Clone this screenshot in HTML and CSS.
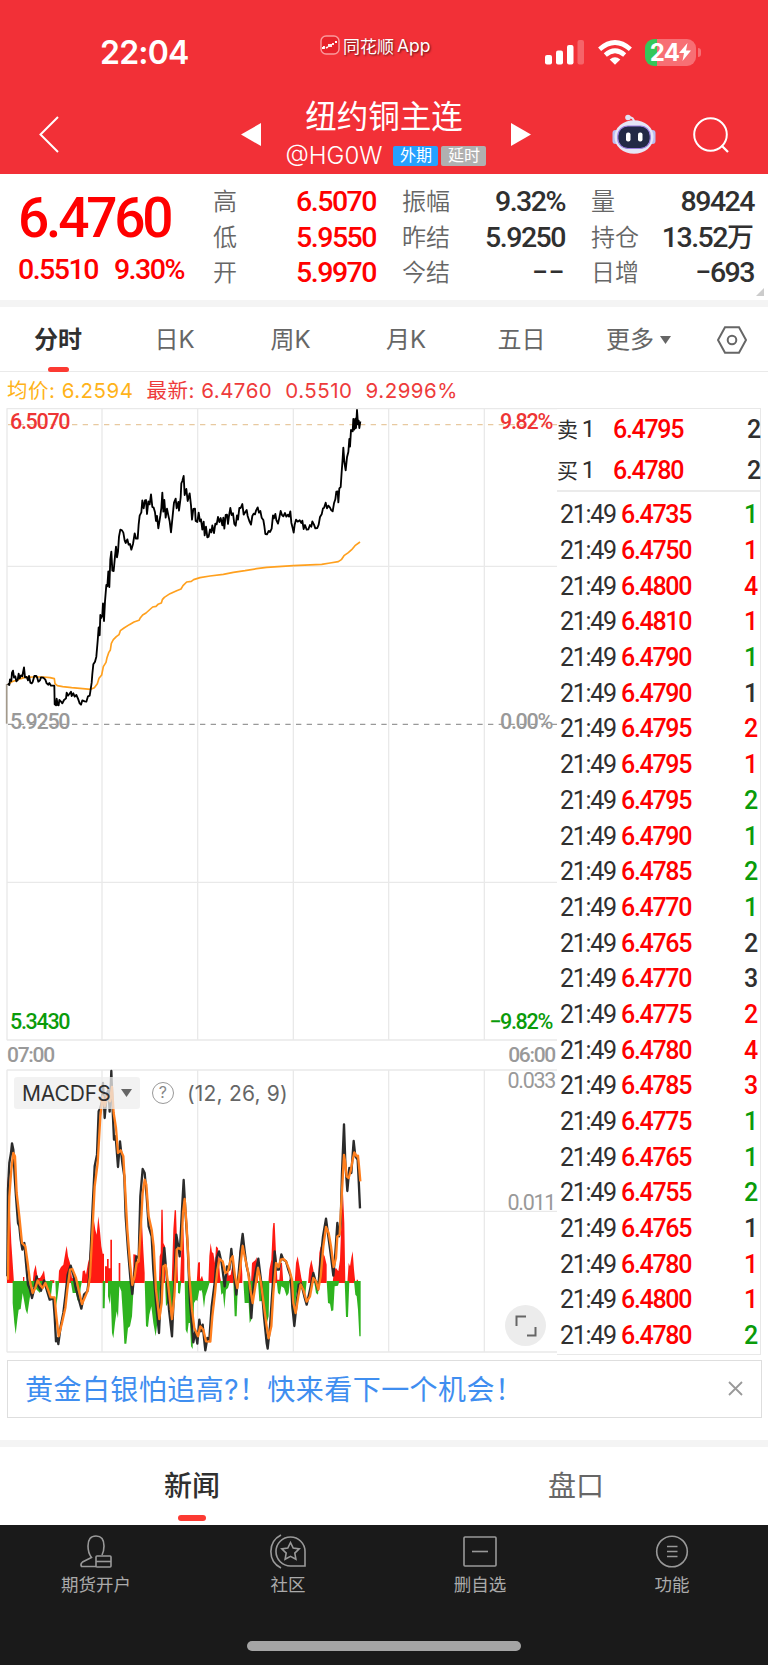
FILE: index.html
```html
<!DOCTYPE html>
<html lang="zh-CN">

	<head>
		<meta charset="UTF-8" />
		<meta name="viewport" content="width=device-width, initial-scale=1.0" />
		<title>纽约铜主连</title>
		<link rel="stylesheet" href="styles.css">
	</head>

	<body>
		<header class="header">
			<div class="status">
				<span class="clock">22:04</span>
				<span class="brand">
					<svg width="20" height="20" viewBox="0 0 20 20">
						<rect x="1" y="1" width="18" height="18" rx="5" fill="#e8222b" stroke="#fa9a9d" stroke-width="1.4" />
						<path d="M2 13h2v-2M6 13l2-1M9 9v3M11 12V9M13 8v2M15 7h2" stroke="#fff" stroke-width="1.8" fill="none" />
					</svg>
					同花顺<span class="app">App</span>
				</span>
				<span class="signals">
					<svg width="40" height="26" viewBox="0 0 40 26" fill="#fff">
						<rect x="0" y="16" width="7" height="9.500" rx="2" />
						<rect x="11" y="11.500" width="7" height="14" rx="2" />
						<rect x="22" y="6" width="6.500" height="19.500" rx="2" />
						<rect x="32.500" y="1" width="6.500" height="24.500" rx="2" opacity=".25" />
					</svg>
					<svg width="34" height="25" viewBox="0 0 34 25" fill="none" stroke="#fff" stroke-width="4.600">
						<path d="M1.600 9.200Q17-4.200 32.400 9.200" />
						<path d="M7.300 15Q17 6.500 26.700 15" />
						<path d="M17 24.800l-5.300-5.400q5.300-4.300 10.600 0z" fill="#fff" stroke="none" />
					</svg>
					<span class="battery">
						<b>24</b>
						<svg width="12" height="18" viewBox="0 0 12 18"><path d="M8.500 0L0 10h5L3.500 18L12 7.500H7z" fill="#fff" /></svg>
					</span>
				</span>
			</div>
			<div class="nav">
				<svg class="back" width="20" height="37" viewBox="0 0 20 37" fill="none" stroke="#fff" stroke-width="2"><path d="M19 1L1.500 18.500L19 36" /></svg>
				<svg class="prev" width="20" height="23" viewBox="0 0 20 23" fill="#fff"><path d="M20 0v23L0 11.500z" /></svg>
				<div class="name">
					<h1>纽约铜主连</h1>
					<p><span class="code">@HG0W</span><i class="tag blue">外期</i><i class="tag">延时</i></p>
				</div>
				<svg class="next" width="20" height="23" viewBox="0 0 20 23" fill="#fff"><path d="M0 0l20 11.500L0 23z" /></svg>
				<svg class="robot" width="44" height="41" viewBox="0 0 44 41">
					<path d="M22 8Q22 3 16 3" fill="none" stroke="#e4e6f5" stroke-width="2" />
					<circle cx="16" cy="3.500" r="2.800" fill="#dfe3f5" />
					<rect x="0.500" y="16" width="6" height="14" rx="3" fill="#b9bdf0" />
					<rect x="37.500" y="16" width="6" height="14" rx="3" fill="#b9bdf0" />
					<ellipse cx="22" cy="23" rx="19.500" ry="16.800" fill="#e6e6f6" />
					<rect x="5.800" y="12" width="32.500" height="22.500" rx="10" fill="#232946" stroke="#9b7fe0" stroke-width="1.200" />
					<rect x="14" y="18.500" width="4.500" height="9" rx="2" fill="#fff" />
					<rect x="26" y="18.500" width="4.500" height="9" rx="2" fill="#fff" />
				</svg>
				<svg class="search" width="36" height="36" viewBox="0 0 36 36" fill="none" stroke="#fff" stroke-width="2"><circle cx="17.500" cy="17.500" r="16.300" /><path d="M28.500 28.500l6.500 6.500" stroke-width="2.300" /></svg>
			</div>
		</header>

		<section class="quote">
			<div class="last">
				<div class="price">6.4760</div>
				<div class="change"><span>0.5510</span><span>9.30%</span></div>
			</div>
			<dl class="stats">
				<dt>高</dt><dd class="red">6.5070</dd>
				<dt>振幅</dt><dd>9.32%</dd>
				<dt>量</dt><dd>89424</dd>
				<dt>低</dt><dd class="red">5.9550</dd>
				<dt>昨结</dt><dd>5.9250</dd>
				<dt>持仓</dt><dd>13.52<span class="wan">万</span></dd>
				<dt>开</dt><dd class="red">5.9970</dd>
				<dt>今结</dt><dd class="dash">−−</dd>
				<dt>日增</dt><dd>−693</dd>
			</dl>
		</section>

		<nav class="periods">
			<span class="on">分时</span>
			<span>日K</span>
			<span>周K</span>
			<span>月K</span>
			<span>五日</span>
			<span class="more">更多<svg width="11" height="8" viewBox="0 0 11 8" fill="#666"><path d="M0 0h11L5.500 8z" /></svg></span>
			<svg width="30" height="28" viewBox="0 0 30 28" fill="none" stroke="#666" stroke-width="2"><path d="M8 1.200h14L29 14l-7 12.800H8L1 14z" /><circle cx="15" cy="14" r="4.300" /></svg>
		</nav>

		<p class="legend"><span class="avg">均价: 6.2594</span><span>最新: 6.4760</span><span>0.5510</span><span>9.2996%</span></p>

		<main class="board">
			<div class="charts">
				<!-- three svg units to one css pixel -->
				<div class="chart">
					<svg width="557" height="633" viewBox="0 24 1671 1899" fill="none">
						<path d="M21 26H1671M21 499H1671M21 1447H1671M21 1920H1671M21 25V1921M306 25V1921M593 25V1921M880 25V1921M1166 25V1921M1453 25V1921" stroke="#e9e9e9" stroke-width="4" />
						<path d="M24 74H1671" stroke="#e8c9a0" stroke-width="3.500" stroke-dasharray="16 16" />
						<path d="M24 973H1671" stroke="#999" stroke-width="3.500" stroke-dasharray="16 16" />
						<path d="M20 971V852" stroke="#a39a8c" stroke-width="5" />
						<path d="M24 854L36 845L50 840L62 836L75 832L100 831L130 831L150 833L163 836L165 851L172 857L188 860L215 863L240 865L272 868L283 863L292 851L297 835L305 825L310 800L318 787L321 773L326 758L331 750L334 730L340 719L349 710L357 704L361 692L372 684L388 674L402 666L417 661L420 655L428 645L438 639L448 630L458 621L468 619L474 613L484 609L487 599L493 592L510 581L530 572L543 567L549 557L560 546L574 544L581 539L600 533L630 528L670 523L700 517L735 512L770 506L800 502L880 497L965 493L990 489L1015 485L1024 479L1032 467L1045 458L1055 449L1065 437L1080 426" stroke="#ffa01e" stroke-width="5" stroke-linejoin="round" />
						<path d="M23 851L28 855L30 838L34 843L36 818L39 812L42 833L46 829L49 844L53 840L56 821L59 835L63 826L67 829L69 817L72 802L75 832L80 831L84 841L87 828L91 848L95 850L98 846L103 828L109 828L112 834L115 845L120 841L123 832L130 833L136 839L140 850L145 854L148 849L153 857L163 857L164 913L168 916L170 896L173 915L176 916L178 900L183 905L187 910L192 900L198 895L200 878L204 887L208 882L213 875L215 888L220 880L224 890L229 885L234 896L239 910L243 914L247 901L254 904L259 905L264 889L269 887L271 875L275 848L277 822L280 793L285 785L289 770L293 723L296 682L299 706L301 645L304 654L307 645L309 610L312 663L315 604L319 555L322 559L325 514L328 561L331 478L334 455L337 512L341 513L345 469L348 440L351 472L354 455L357 410L361 389L366 391L370 398L374 421L377 429L382 418L386 434L390 432L394 449L399 432L404 400L408 416L413 416L416 373L419 347L424 337L427 301L431 325L435 301L438 300L441 342L445 304L449 313L453 283L457 321L461 323L465 337L468 363L471 348L475 385L481 347L484 324L487 278L490 335L493 300L497 353L501 326L505 346L509 364L513 397L519 337L522 308L527 296L530 325L535 306L537 332L542 292L544 250L547 243L551 228L554 285L559 267L563 303L569 280L573 316L576 359L580 327L585 326L587 363L592 366L596 338L600 364L603 358L607 389L611 365L614 406L618 380L622 412L626 410L630 388L634 397L637 376L642 399L646 371L650 373L654 351L658 366L662 354L667 376L670 353L673 386L677 345L681 344L684 372L687 348L691 324L695 345L699 340L703 372L707 377L711 346L714 359L718 324L722 324L727 312L731 344L736 336L740 330L743 348L748 363L753 374L757 348L761 341L765 343L768 332L773 322L777 338L781 333L785 353L790 360L793 378L796 402L801 403L806 393L810 396L815 386L819 346L822 355L826 342L829 360L834 371L838 353L842 333L846 345L850 349L855 339L859 350L864 344L867 350L871 334L874 368L878 384L881 398L884 374L888 359L893 365L899 361L904 369L907 362L911 387L915 375L920 389L925 388L930 375L934 380L937 364L942 374L946 385L952 384L956 374L960 351L965 343L969 325L972 324L977 308L981 325L985 317L990 323L994 331L998 334L1002 310L1006 298L1009 275L1013 274L1015 307L1018 265L1022 261L1025 216L1028 175L1030 143L1033 186L1037 211L1041 172L1045 156L1048 117L1050 140L1053 90L1058 94L1060 57L1063 89L1066 56L1068 84L1071 30L1074 73L1076 62L1078 84L1081 64" stroke="#000" stroke-width="5.500" stroke-linejoin="round" />
					</svg>
					<span class="mark high red">6.5070</span>
					<span class="mark high right red">9.82%</span>
					<span class="mark mid">5.9250</span>
					<span class="mark mid right">0.00%</span>
					<span class="mark low green">5.3430</span>
					<span class="mark low right green">−9.82%</span>
				</div>
				<div class="times"><span>07:00</span><span>06:00</span></div>
				<div class="macd">
					<svg width="557" height="284" viewBox="0 118 1671 852" fill="none">
						<path d="M21 121H1671M21 545H1671M21 967H1671M21 120V968M306 120V968M593 120V968M880 120V968M1166 120V968M1453 120V968" stroke="#e9e9e9" stroke-width="4" />
						<path d="M21 760V440L30 545L34 640L38 700L42 760H69V742H73V760H98L101 728L107 705L113 745L120 745L126 735L132 722L137 760H150V752H163V760H175L177 723L183 712L190 705L196 670L200 648L204 680L210 700L216 745L228 748L232 760H245L248 725L254 722L258 735L264 700L268 685L274 610L280 560L286 600L290 615L295 560L300 605L304 650L308 672L312 672V760H315V710H321V688H326V716H331V630H336V760H356V700H361V760H400V674L408 675L415 700L421 620L426 576L430 660L434 730V760H477L479 680L482 670L484 540H488L490 640L495 650V760H515L520 600L524 542H528L531 640L534 760H540L544 660L550 590L553 690V760H590L594 700L598 698V760H625V760L628 760V758L593 760L595 698H600V750L606 738L612 760H625L628 680L632 640L636 668L640 670L645 700L648 650L654 655L660 740L664 760H678L682 705L686 738L692 735L698 700L702 760H714L718 670L722 650L727 735V760H753L756 700L762 695L766 692L770 682L774 760H805L808 720L814 690L818 600L820 580H824L828 670L832 750H838L842 700L846 700L850 760H867V750H873V760H884L888 700L893 680L898 708L904 745L908 760H924L928 718L934 690L940 720L944 760H954L958 670L962 650L968 670L974 680L980 705V760H998L1002 720L1008 715L1015 725L1020 690L1024 580L1029 490L1033 580L1036 760H1042L1046 700L1050 710L1054 684L1058 665L1062 720L1066 760H1070V750H1074V760Z" fill="#ff1a12" />
						<path d="M38 754V820L43 880L47 914L52 870L56 840L62 838L68 790L72 812L77 840L82 854L87 820L94 776L104 770L110 780L120 790L127 765L140 770L152 806L158 754H166L169 830L174 790L178 754H212L218 790L228 790L232 812L238 815L242 775L246 754H308V836H314L316 754H324V800L330 824L332 790L336 910L340 926L345 880L350 845L354 866L358 770L364 785L370 880L373 942H379L384 895L390 890L396 860L402 754H434L438 890L444 892L448 855L454 830L460 880L467 920L472 880L478 800L482 754H495L498 830L504 820L510 840L515 872L520 830L524 754H534V790L540 792L544 754H554L557 900L562 912L566 880L570 880L573 950L578 958L582 820L588 810L592 815L598 780L600 785L604 780L607 790L612 835L616 800L624 775L630 754H660L664 795L669 790L673 838L678 780L684 775L690 754H700L704 860H710L714 754H730L734 820H746L749 880L754 870L758 790L764 780L768 754H774L778 815L790 814L794 850L798 890L806 860L808 754H830L834 790L840 795L844 770L852 775L860 800L866 790L870 754H872L876 850L884 860L888 800L893 775L900 754H906L910 790L916 795L920 754H942L948 790L954 795L958 754H980L984 820L990 822L994 845L1000 842L1004 770L1014 768L1018 754H1034L1038 862H1044L1048 754H1062L1066 795L1070 800L1074 840L1078 920H1082V754Z" fill="#2eb31f" />
						<path d="M22 740L24 480L28 400L33 370L36 341L40 360L44 440L48 500L54 580L58 590L62 630L67 660L73 640L78 700L84 765L90 780L96 805L102 780L110 740L116 770L123 783L132 752L140 780L149 810L160 806L164 860L168 935L172 926L175 943L182 890L190 850L196 800L203 735L212 708L220 735L226 770L238 815L244 837L252 795L262 785L268 740L273 640L278 530L284 410L291 375L296 245L301 235L306 215L309 160L314 265L320 195L325 180L329 246L334 124L338 240L342 330L347 320L354 412L360 335L367 400L373 440L377 560L384 660L391 745L397 793L402 740L409 680L416 685L421 500L428 418L434 430L440 500L446 590L455 620L460 720L468 820L477 910L484 760L493 655L500 740L507 840L516 920L523 760L529 615L535 650L539 680L546 540L551 451L556 540L563 650L570 820L580 938L586 905L592 942L598 870L603 905L608 885L612 925L616 962L622 925L628 930L635 830L644 760L650 685L657 665L665 700L674 770L681 710L688 720L694 658L700 720L709 795L716 730L722 660L728 613L734 665L740 710L747 740L754 865L761 760L768 720L775 687L784 760L792 860L800 940L803 957L810 890L818 770L824 665L830 720L837 720L844 674L850 690L858 695L865 720L872 740L877 830L883 889L891 810L896 765L904 762L913 800L920 825L930 780L940 730L948 760L954 780L961 700L969 620L978 567L985 620L993 680L1000 738L1006 670L1012 580L1017 620L1022 580L1026 430L1032 284L1036 400L1042 484L1048 415L1054 430L1061 334L1066 380L1073 390L1076 450L1080 536" stroke="#2b2b2b" stroke-width="7" stroke-linejoin="round" />
						<path d="M24 750L25 650L28 500L34 420L40 370L45 380L50 490L58 560L66 640L76 650L83 700L90 755L98 790L106 775L113 752L120 765L128 775L136 760L144 780L152 803L164 803L168 850L176 920L186 880L196 835L202 780L210 720L217 718L228 745L236 780L246 823L256 800L264 780L270 740L277 610L284 470L293 400L301 260L308 200L314 230L322 200L330 215L336 172L341 250L348 295L354 370L362 362L370 380L374 450L382 600L390 700L397 766L404 740L410 700L416 695L422 600L428 490L434 450L439 465L446 560L455 600L461 650L468 780L478 868L485 820L490 710L497 706L504 760L516 868L523 800L530 660L536 655L544 660L549 550L554 508L560 590L568 740L576 840L583 895L594 920L601 890L610 900L618 935L631 936L637 860L645 790L652 720L659 688L668 695L676 730L684 725L692 690L698 680L705 740L712 775L720 720L728 649L734 680L744 725L751 780L758 820L766 770L774 715L783 760L792 830L800 890L806 926L814 890L820 790L828 700L836 712L842 690L850 688L858 695L868 720L876 750L880 820L887 850L895 800L902 764L910 780L920 816L930 800L940 745L948 755L955 780L962 740L970 650L978 592L986 610L993 650L1001 712L1008 685L1012 620L1019 615L1024 520L1032 376L1036 400L1040 440L1046 445L1053 420L1058 390L1063 368L1070 380L1074 378L1078 420L1081 455" stroke="#ff7f1e" stroke-width="7" stroke-linejoin="round" />
					</svg>
					<div class="indicator">
						<span class="chip">MACDFS<svg width="11" height="8" viewBox="0 0 11 8" fill="#666"><path d="M0 0h11L5.500 8z" /></svg></span>
						<span class="help">?</span>
						<span class="args">(12, 26, 9)</span>
					</div>
					<span class="mark top right">0.033</span>
					<span class="mark half right">0.011</span>
					<span class="expand">
						<svg width="22" height="22" viewBox="0 0 22 22" fill="none" stroke="#666" stroke-width="2"><path d="M1.500 11V1.500H11M12 20.500h8.500V12" /></svg>
					</span>
				</div>
			</div>

			<div class="trades">
				<ul class="book">
					<li><span>卖<em>1</em></span><b>6.4795</b><i>2</i></li>
					<li><span>买<em>1</em></span><b>6.4780</b><i>2</i></li>
				</ul>
				<ul class="ticks">
					<li><span>21:49</span><b>6.4735</b><i class="green">1</i></li>
					<li><span>21:49</span><b>6.4750</b><i class="red">1</i></li>
					<li><span>21:49</span><b>6.4800</b><i class="red">4</i></li>
					<li><span>21:49</span><b>6.4810</b><i class="red">1</i></li>
					<li><span>21:49</span><b>6.4790</b><i class="green">1</i></li>
					<li><span>21:49</span><b>6.4790</b><i>1</i></li>
					<li><span>21:49</span><b>6.4795</b><i class="red">2</i></li>
					<li><span>21:49</span><b>6.4795</b><i class="red">1</i></li>
					<li><span>21:49</span><b>6.4795</b><i class="green">2</i></li>
					<li><span>21:49</span><b>6.4790</b><i class="green">1</i></li>
					<li><span>21:49</span><b>6.4785</b><i class="green">2</i></li>
					<li><span>21:49</span><b>6.4770</b><i class="green">1</i></li>
					<li><span>21:49</span><b>6.4765</b><i>2</i></li>
					<li><span>21:49</span><b>6.4770</b><i>3</i></li>
					<li><span>21:49</span><b>6.4775</b><i class="red">2</i></li>
					<li><span>21:49</span><b>6.4780</b><i class="red">4</i></li>
					<li><span>21:49</span><b>6.4785</b><i class="red">3</i></li>
					<li><span>21:49</span><b>6.4775</b><i class="green">1</i></li>
					<li><span>21:49</span><b>6.4765</b><i class="green">1</i></li>
					<li><span>21:49</span><b>6.4755</b><i class="green">2</i></li>
					<li><span>21:49</span><b>6.4765</b><i>1</i></li>
					<li><span>21:49</span><b>6.4780</b><i class="red">1</i></li>
					<li><span>21:49</span><b>6.4800</b><i class="red">1</i></li>
					<li><span>21:49</span><b>6.4780</b><i class="green">2</i></li>
				</ul>
			</div>
		</main>

		<div class="notice">
			<span>黄金白银怕追高?！快来看下一个机会！</span>
			<svg width="15" height="15" viewBox="0 0 15 15" stroke="#999" stroke-width="1.800"><path d="M1 1l13 13M14 1L1 14" /></svg>
		</div>

		<nav class="panels">
			<span class="on">新闻</span>
			<span>盘口</span>
		</nav>

		<footer class="bar">
			<div class="items">
				<a>
					<svg width="36" height="36" viewBox="0 0 36 36"><path d="M18 32.500H3.500Q2 30 4.500 28L13.500 23.500Q10 19 10 12Q10 2 18 2Q26 2 26 12Q26 17 24 21" /><rect x="18" y="22" width="15" height="11" rx="1" /><path d="M18 27.500H33" /></svg>
					期货开户
				</a>
				<a>
					<svg width="36" height="36" viewBox="0 0 36 36"><path d="M35 32H20.500A14.500 14.500 0 1 1 35 17.500ZM11 1A18.500 18.500 0 0 0 11 34" /><path d="M20.500 8.500l2.700 5.600 6 .8-4.400 4.200 1.100 6.100-5.400-2.900-5.400 2.900 1.100-6.100-4.400-4.200 6-.8z" /></svg>
					社区
				</a>
				<a>
					<svg width="36" height="36" viewBox="0 0 36 36"><rect x="2" y="3" width="32" height="29" rx="1" /><path d="M10 17.500H26" /></svg>
					删自选
				</a>
				<a>
					<svg width="36" height="36" viewBox="0 0 36 36"><circle cx="18" cy="17.500" r="15.300" /><path d="M13 12.500H23.500M13 17.500H23.500M13 22.500H23.500" /></svg>
					功能
				</a>
			</div>
			<div class="home"></div>
		</footer>
	</body>

</html>
```
FILE: styles.css
```css
* {
	box-sizing: border-box;
	margin: 0;
	padding: 0;
}

body {
	width: 768px;
	height: 1665px;
	overflow: hidden;
	background: #fff;
	color: #303030;
	font-family: Inter, "Noto Sans CJK SC", sans-serif;
}

svg {
	display: block;
	flex: none;
}

i, em {
	font-style: normal;
}

ul {
	list-style: none;
}

.red {
	color: #f00;
}

.green {
	color: #0a9b0a;
}

/* header */
.header {
	height: 174px;
	background: #f23037;
	color: #fff;
}

.status {
	display: grid;
	grid-template-columns: 320px 225px 1fr;
	height: 90px;
	padding-top: 32px;
}

.clock {
	padding-left: 100px;
	font-size: 32px;
	font-weight: 600;
	line-height: 42px;
	letter-spacing: -0.8px;
}

.brand {
	display: flex;
	align-items: center;
	height: 26px;
	font-size: 17px;
	text-shadow: 1px 1px 2px rgba(0, 0, 0, 0.6);
}

.brand svg {
	margin-right: 3px;
}

.app {
	margin-left: 3px;
	font-size: 17.5px;
}

.signals {
	display: flex;
	align-items: center;
	gap: 13px;
	height: 40px;
}

.battery {
	position: relative;
	display: flex;
	align-items: center;
	justify-content: center;
	width: 51px;
	height: 27px;
	border-radius: 9px;
	background: linear-gradient(90deg, #34c759 12px, #f76f74 12px);
}

.battery::after {
	content: "";
	position: absolute;
	right: -5px;
	top: 9px;
	width: 3px;
	height: 9px;
	border-radius: 0 4px 4px 0;
	background: #f76f74;
}

.battery b {
	font-size: 24px;
	letter-spacing: -0.8px;
}

.nav {
	display: grid;
	grid-template-columns: 39px 202px 20px 250px 101px 81px 1fr;
	align-items: center;
	height: 84px;
}

.back {
	grid-column: 2;
	margin-top: 5px;
}

.prev,
.next {
	margin-top: 4px;
}

.search {
	margin-top: 5px;
}

.robot {
	margin-top: 4px;
}

.name {
	align-self: start;
	text-align: center;
}

.name h1 {
	height: 50px;
	padding-right: 4px;
	font-size: 31.5px;
	font-weight: 400;
	line-height: 53px;
}

.name p {
	display: flex;
	align-items: center;
	justify-content: center;
	height: 31px;
}

.code {
	margin-right: 11px;
	font-size: 24px;
	font-weight: 350;
}

.tag {
	width: 45px;
	height: 20px;
	border-radius: 2px;
	background: #b0b0b0;
	font-size: 16px;
	line-height: 19px;
}

.tag.blue {
	margin-right: 3px;
	background: #26a1ff;
}

/* quote summary */
.quote {
	display: grid;
	grid-template-columns: 213px 541px;
	height: 133px;
	border-bottom: 7px solid #f4f4f4;
	font-family: Roboto, "Noto Sans CJK SC", sans-serif;
	font-stretch: 88%;
	position: relative;
}

.quote::after {
	content: "";
	position: absolute;
	right: 4px;
	bottom: 4px;
	border: 4px solid #ccc;
	border-top-color: transparent;
	border-left-color: transparent;
}

.last {
	padding-left: 18px;
	color: #f00;
	font-weight: 500;
}

.price {
	height: 78px;
	font-size: 55px;
	line-height: 89px;
	letter-spacing: -3.2px;
}

.change {
	display: flex;
	gap: 16px;
	font-size: 28.5px;
	line-height: 35px;
	letter-spacing: -1.5px;
}

.stats {
	display: grid;
	grid-template-columns: 74px 89px 26px 74px 89px 26px 64px 99px;
	grid-auto-rows: 35.5px;
	padding-top: 10px;
	font-size: 28.5px;
	line-height: 35px;
}

.stats dt {
	color: #666;
	font-size: 24px;
	font-weight: 350;
	line-height: 36px;
}

.stats dt:nth-of-type(3n+2) {
	grid-column: 4;
}

.stats dt:nth-of-type(3n) {
	grid-column: 7;
}

.stats dd {
	justify-self: end;
	white-space: nowrap;
	font-weight: 500;
	letter-spacing: -1.5px;
}

.stats .dash {
	letter-spacing: 0.5px;
}

.wan {
	font-size: 27px;
	letter-spacing: 0;
}

/* period tabs */
.periods {
	display: grid;
	grid-template-columns: 116px 117px 115px 116px 115px 138px 1fr;
	align-items: center;
	height: 65px;
	border-bottom: 1px solid #eaeaea;
	color: #666;
	font-size: 24px;
	font-weight: 400;
	line-height: 65px;
	text-align: center;
}

.on {
	position: relative;
	color: #303030;
	font-weight: 600;
}

.on::after {
	content: "";
	position: absolute;
	left: 50%;
	bottom: 0;
	width: 21px;
	height: 5px;
	margin-left: -10px;
	border-radius: 3px;
	background: #fc3a32;
}

.more {
	display: flex;
	align-items: center;
	gap: 6px;
	padding-left: 27px;
}

.legend {
	display: flex;
	gap: 13px;
	height: 36px;
	padding-left: 7px;
	color: #ee3b3b;
	font-size: 20.5px;
	line-height: 38px;
	letter-spacing: 0.5px;
}

.avg {
	color: #ffb31a;
}

/* chart and trades */
.board {
	display: grid;
	grid-template-columns: 557px 204px;
	height: 945px;
	font-family: Roboto, "Noto Sans CJK SC", sans-serif;
	font-stretch: 88%;
}

.chart,
.macd {
	position: relative;
}

.mark {
	position: absolute;
	left: 10px;
	color: #999;
	font-size: 21.5px;
	font-weight: 500;
	line-height: 24px;
	letter-spacing: -1.3px;
}

.mark.right {
	left: auto;
	right: 5px;
}

.mark.red {
	color: #ee3535;
}

.mark.green {
	color: #0a9b0a;
}

.mark.high {
	top: 2px;
}

.mark.mid {
	top: 302px;
}

.mark.low {
	top: 602px;
}

.mark.top {
	top: 0;
	right: 2px;
	font-weight: 400;
}

.mark.half {
	top: 122px;
	right: 2px;
	font-weight: 400;
}

.times {
	display: flex;
	justify-content: space-between;
	height: 28px;
	padding: 0 2px 0 7px;
	color: #999;
	font-size: 21px;
	font-weight: 500;
	line-height: 28px;
	letter-spacing: -1.3px;
}

.indicator {
	position: absolute;
	left: 14px;
	top: 8px;
	display: flex;
	align-items: center;
	height: 32px;
	color: #666;
	font-family: Inter, sans-serif;
	font-size: 21px;
	font-stretch: normal;
	letter-spacing: 0.2px;
}

.chip {
	display: flex;
	align-items: center;
	justify-content: space-between;
	width: 126px;
	height: 32px;
	padding: 0 8px 0 8px;
	border-radius: 3px;
	background: rgba(238, 238, 238, 0.75);
	color: #303030;
	letter-spacing: -0.1px;
}

.help {
	width: 22px;
	height: 22px;
	margin: 0 13px 0 12px;
	border: 1.5px solid #999;
	border-radius: 50%;
	color: #888;
	font-size: 16px;
	line-height: 19px;
	text-align: center;
}

.expand {
	position: absolute;
	right: 11px;
	bottom: 7px;
	display: flex;
	align-items: center;
	justify-content: center;
	width: 41px;
	height: 41px;
	border-radius: 50%;
	background: #ececec;
}

.trades {
	border: 1px solid #e8e8e8;
	border-left: 0;
	font-size: 25px;
}

.trades li {
	display: grid;
	grid-template-columns: 61px 1fr 20px;
	align-items: center;
	height: 35.7px;
	padding: 0 3px 0 3px;
	letter-spacing: -1.3px;
	white-space: nowrap;
}

.trades b {
	color: #f00;
	font-weight: 500;
}

.trades i {
	font-weight: 500;
	text-align: right;
}

.book {
	height: 83px;
	border-bottom: 2px solid #ebebeb;
	margin-bottom: 5px;
}

.trades .book li {
	grid-template-columns: 56px 1fr 20px;
	height: 41px;
	padding: 0;
}

.book span {
	font-size: 21px;
	font-weight: 400;
	line-height: 30px;
}

.book em {
	margin-left: 5px;
	font-size: 24px;
}

/* notice */
.notice {
	display: flex;
	align-items: center;
	justify-content: space-between;
	height: 58px;
	margin: 7px 6px 22px 7px;
	padding: 0 18px 2px 17px;
	border: 1px solid #dedede;
	color: #3f8ef0;
	font-size: 28px;
	font-weight: 400;
	letter-spacing: 0.45px;
}

.panels {
	display: grid;
	grid-template-columns: 1fr 1fr;
	height: 85px;
	border-top: 7px solid #f4f4f4;
	color: #666;
	font-size: 28px;
	font-weight: 400;
	line-height: 79px;
	text-align: center;
}

.panels .on {
	font-weight: 500;
}

.panels .on::after {
	bottom: 5px;
	width: 28px;
	height: 6px;
	margin-left: -14px;
}

/* bottom bar */
.bar {
	height: 140px;
	background: #1a1a1a;
}

.items {
	display: grid;
	grid-template-columns: repeat(4, 1fr);
	height: 116px;
}

.items a {
	display: flex;
	flex-direction: column;
	align-items: center;
	padding-top: 9px;
	color: #aaa;
	font-size: 17.5px;
	font-weight: 400;
	line-height: 30px;
}

.items svg {
	fill: none;
	stroke: #999;
	stroke-width: 1.6;
}

.home {
	width: 274px;
	height: 10px;
	margin: 0 auto;
	border-radius: 5px;
	background: #a5a5a5;
}
```
